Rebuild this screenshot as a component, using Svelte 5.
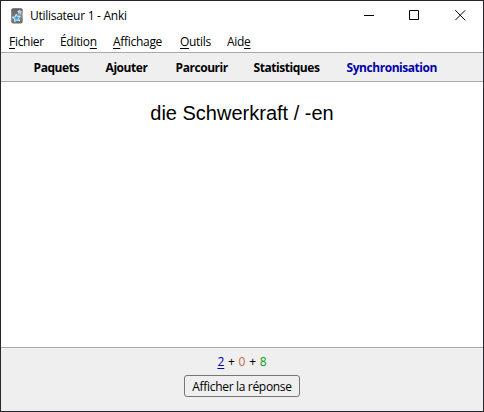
<script>
  const menus = [
    { before: '', key: 'F', after: 'ichier', width: 35 },
    { before: 'Éditio', key: 'n', after: '', width: 37 },
    { before: '', key: 'A', after: 'ffichage', width: 51 },
    { before: '', key: 'O', after: 'utils', width: 31 },
    { before: 'Aid', key: 'e', after: '', width: 24 }
  ];
  const links = [
    { label: 'Paquets', width: 45 },
    { label: 'Ajouter', width: 43 },
    { label: 'Parcourir', width: 51 },
    { label: 'Statistiques', width: 66 },
    { label: 'Synchronisation', width: 91, sync: true }
  ];
</script>

<div class="window">
  <header class="titlebar">
    <svg class="logo" width="12" height="16" viewBox="0 0 12 16">
      <defs>
        <linearGradient id="card" x1="0" y1="0" x2="0" y2="1">
          <stop offset="0" stop-color="#686868" />
          <stop offset=".4" stop-color="#929292" />
          <stop offset="1" stop-color="#686868" />
        </linearGradient>
      </defs>
      <rect x=".2" y=".3" width="11.5" height="15.2" rx="2" fill="url(#card)" />
      <path d="M.5 8C4 8 8 6 11.5 3V2Q11.5.5 10 .5H2Q.5.5.5 2z" fill="#555" opacity=".5" />
      <path d="M5.2 6.2l1.3 2.2 2.7-.3-1.6 2.2 1.1 2.6-2.8-.9-2.2 1.7.1-2.8-2.3-1.4 2.7-.7z" fill="#3fa9f0" stroke="#d5efff" stroke-width="1" />
      <path d="M8.6 1.9l.6 1.2 1.3.1-.9 1 .2 1.3-1.2-.6-1.2.6.2-1.3-.9-1 1.3-.2z" fill="#8bd1fa" stroke="#e5f5ff" stroke-width=".6" />
    </svg>
    <span class="title">Utilisateur 1 - Anki</span>
    <div class="controls">
      <svg width="11" height="11" viewBox="0 0 11 11"><path d="M0 5.5h10" /></svg>
      <svg width="11" height="11" viewBox="0 0 11 11"><path d="M.5.5h9v9h-9z" /></svg>
      <svg width="11" height="11" viewBox="0 0 11 11"><path d="M.3.3l9.9 9.9M10.2.3L.3 10.2" /></svg>
    </div>
  </header>

  <nav class="menubar">
    {#each menus as m}
      <span style:width="{m.width}px">{m.before}<u>{m.key}</u>{m.after}</span>
    {/each}
  </nav>

  <nav class="toolbar">
    {#each links as l}
      <span class:sync={l.sync} style:width="{l.width}px">{l.label}</span>
    {/each}
  </nav>

  <main>die Schwerkraft / -en</main>

  <footer>
    <div class="counts"><u class="new">2</u> + <span class="learn">0</span> + <span class="due">8</span></div>
    <button>Afficher la réponse</button>
  </footer>
</div>

<style>
  .window {
    box-sizing: border-box;
    width: 484px;
    height: 412px;
    border: 1px solid #29252d;
    background: #fff;
    color: #000;
    display: flex;
    flex-direction: column;
    overflow: hidden;
    font: 12px/16px 'Open Sans', 'Noto Sans', sans-serif;
    white-space: nowrap;
  }
  .titlebar {
    height: 30px;
    flex: none;
    display: flex;
    align-items: center;
    padding-left: 10px;
  }
  .logo { margin-right: 7px; }
  .title { letter-spacing: -0.27px; }
  .controls {
    align-self: flex-start;
    margin-left: auto;
    display: flex;
    gap: 34px;
    padding: 9px 17px 0 0;
  }
  .controls svg:last-child { margin-left: 1px; }
  .controls path { fill: none; stroke: #000; stroke-width: 1; }
  .menubar {
    height: 21px;
    flex: none;
    display: flex;
    align-items: center;
    gap: 16px;
    padding-left: 8px;
    letter-spacing: -0.3px;
  }
  u { text-underline-offset: 2px; text-decoration-thickness: 1px; }
  .toolbar {
    box-sizing: border-box;
    height: 30px;
    flex: none;
    display: flex;
    align-items: center;
    gap: 27px;
    padding: 2px 0 0 32.6px;
    background: #efefef;
    border-top: 1px solid #a9a9a9;
    border-bottom: 1px solid #a9a9a9;
    font-weight: 700;
    letter-spacing: -0.46px;
  }
  .sync { color: #0000aa; }
  main {
    flex: 1;
    padding-top: 20px;
    text-align: center;
    font: 20px/23px 'Liberation Sans', Arial, sans-serif;
  }
  footer {
    box-sizing: border-box;
    height: 64px;
    flex: none;
    display: flex;
    flex-direction: column;
    align-items: center;
    background: #efefef;
    border-top: 1px solid #a9a9a9;
    padding-top: 6px;
  }
  .counts { height: 21px; word-spacing: 0.6px; }
  .new { color: #0000aa; }
  .learn { color: #c8683c; }
  .due { color: #00a010; }
  button {
    box-sizing: border-box;
    width: 116px;
    height: 22px;
    padding: 1px 0 0 0;
    border: 1px solid #767676;
    border-radius: 3px;
    background: #efefef;
    color: #000;
    font: inherit;
    letter-spacing: -0.32px;
  }
</style>
